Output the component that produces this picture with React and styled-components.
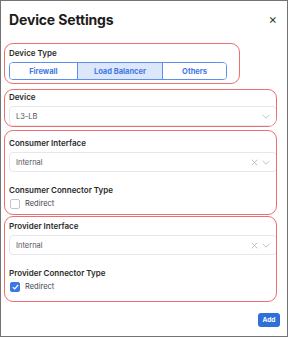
import React from "react";
import styled, { createGlobalStyle } from "styled-components";

const GlobalStyle = createGlobalStyle`
  html, body {
    margin: 0;
    padding: 0;
    background: #ffffff;
  }
  * {
    box-sizing: border-box;
  }
`;

function ChevronIcon() {
  return (
    <svg width="8" height="5" viewBox="0 0 8 5" fill="none">
      <path d="M0.5 0.7 L4 4.2 L7.5 0.7" stroke="#b9bcc3" strokeWidth="0.9" />
    </svg>
  );
}

function ClearIcon() {
  return (
    <svg width="7" height="7" viewBox="0 0 7 7" fill="none">
      <path d="M0.7 0.7 L6.3 6.3 M6.3 0.7 L0.7 6.3" stroke="#b9bcc3" strokeWidth="0.9" />
    </svg>
  );
}

function CheckIcon() {
  return (
    <svg width="7" height="6" viewBox="0 0 7 6" fill="none">
      <path d="M0.8 3.1 L2.7 4.9 L6.2 1" stroke="#ffffff" strokeWidth="1.2" />
    </svg>
  );
}

function Select({ value, clearable }) {
  return (
    <SelectBox>
      <SelectValue>{value}</SelectValue>
      <SelectIcons>
        {clearable && <ClearIcon />}
        <ChevronIcon />
      </SelectIcons>
    </SelectBox>
  );
}

function Checkbox({ checked, label }) {
  return (
    <CheckRow>
      <Box checked={checked}>{checked && <CheckIcon />}</Box>
      <CheckText>{label}</CheckText>
    </CheckRow>
  );
}

const deviceTypes = [
  { name: "Firewall", grow: 68 },
  { name: "Load Balancer", grow: 86 },
  { name: "Others", grow: 64 },
];

export default function App() {
  return (
    <>
      <GlobalStyle />
      <Modal>
        <Header>
          <Title>Device Settings</Title>
          <Close>×</Close>
        </Header>

        <Group width="236px" pt="4px" pb="3px" mb="5px">
          <Label>Device Type</Label>
          <Segmented>
            {deviceTypes.map((t) => (
              <Segment key={t.name} active={t.name === "Load Balancer"} grow={t.grow}>
                {t.name}
              </Segment>
            ))}
          </Segmented>
        </Group>

        <Group pt="2px" pb="0px" mb="3px">
          <Label>Device</Label>
          <Select value="L3-LB" />
        </Group>

        <Group pt="7px" pb="5px" mb="1px">
          <Label>Consumer Interface</Label>
          <Select value="Internal" clearable />
          <Label spaced>Consumer Connector Type</Label>
          <Checkbox label="Redirect" />
        </Group>

        <Group pt="4px" pb="9px" mb="0px">
          <Label>Provider Interface</Label>
          <Select value="Internal" clearable />
          <Label spaced>Provider Connector Type</Label>
          <Checkbox checked label="Redirect" />
        </Group>

        <Footer>
          <AddButton>Add</AddButton>
        </Footer>
      </Modal>
    </>
  );
}

const Modal = styled.div`
  width: 288px;
  height: 337px;
  border: 1.5px solid #737373;
  background: #ffffff;
  display: flex;
  flex-direction: column;
  padding: 0 0 0 3px;
  font-family: Inter, "Liberation Sans", sans-serif;
  color: #2a2a2a;
`;

const Header = styled.div`
  display: flex;
  align-items: center;
  justify-content: space-between;
  height: 36px;
  padding: 0 10px 0 5px;
  margin-bottom: 6px;
`;

const Title = styled.h1`
  margin: 0;
  font-size: 14px;
  font-weight: 700;
  color: #1c1c1c;
  letter-spacing: -0.15px;
`;

const Close = styled.span`
  font-size: 13px;
  color: #3a3a3a;
  line-height: 1;
`;

const Group = styled.section`
  width: ${(p) => p.width || "273px"};
  border: 1.3px solid #ea7072;
  border-radius: 9px;
  padding: ${(p) => p.pt} 0 ${(p) => p.pb} 4px;
  margin-bottom: ${(p) => p.mb};
  display: flex;
  flex-direction: column;
  overflow: hidden;
`;

const Label = styled.div`
  font-size: 8px;
  font-weight: 600;
  line-height: 10px;
  color: #2a2a2a;
  margin: ${(p) => (p.spaced ? "13px 0 3px" : "0 0 4px")};
`;

const Segmented = styled.div`
  display: flex;
  width: 218px;
  height: 18px;
  border: 1px solid #5b8ff0;
  border-radius: 4px;
  overflow: hidden;
`;

const Segment = styled.div`
  flex: ${(p) => p.grow} 0 0;
  display: flex;
  align-items: center;
  justify-content: center;
  font-size: 7.5px;
  font-weight: 700;
  color: #3f78e6;
  background: ${(p) => (p.active ? "#dce7fc" : "#ffffff")};
  & + & {
    border-left: 1px solid #5b8ff0;
  }
`;

const SelectBox = styled.div`
  width: 268px;
  height: 20px;
  border: 1px solid #e6e7ec;
  border-radius: 4px;
  display: flex;
  align-items: center;
  justify-content: space-between;
  padding: 0 6px 0 6px;
  background: #ffffff;
  flex-shrink: 0;
`;

const SelectValue = styled.span`
  font-size: 7.5px;
  color: #50555b;
`;

const SelectIcons = styled.span`
  display: flex;
  align-items: center;
  gap: 4px;
`;

const CheckRow = styled.div`
  display: flex;
  align-items: center;
  gap: 5px;
  padding-left: 1px;
  height: 11px;
`;

const Box = styled.span`
  width: 10px;
  height: 10px;
  border-radius: 2px;
  border: 1px solid ${(p) => (p.checked ? "#3b78e7" : "#c3c5ca")};
  background: ${(p) => (p.checked ? "#3b78e7" : "#ffffff")};
  display: flex;
  align-items: center;
  justify-content: center;
`;

const CheckText = styled.span`
  font-size: 7.5px;
  color: #444850;
`;

const Footer = styled.div`
  display: flex;
  justify-content: flex-end;
  padding: 11px 7px 0 0;
`;

const AddButton = styled.button`
  width: 22px;
  height: 14px;
  border: none;
  border-radius: 3px;
  background: #2f6fd8;
  color: #ffffff;
  font-family: Inter, "Liberation Sans", sans-serif;
  font-size: 6.5px;
  font-weight: 700;
  padding: 0;
`;
